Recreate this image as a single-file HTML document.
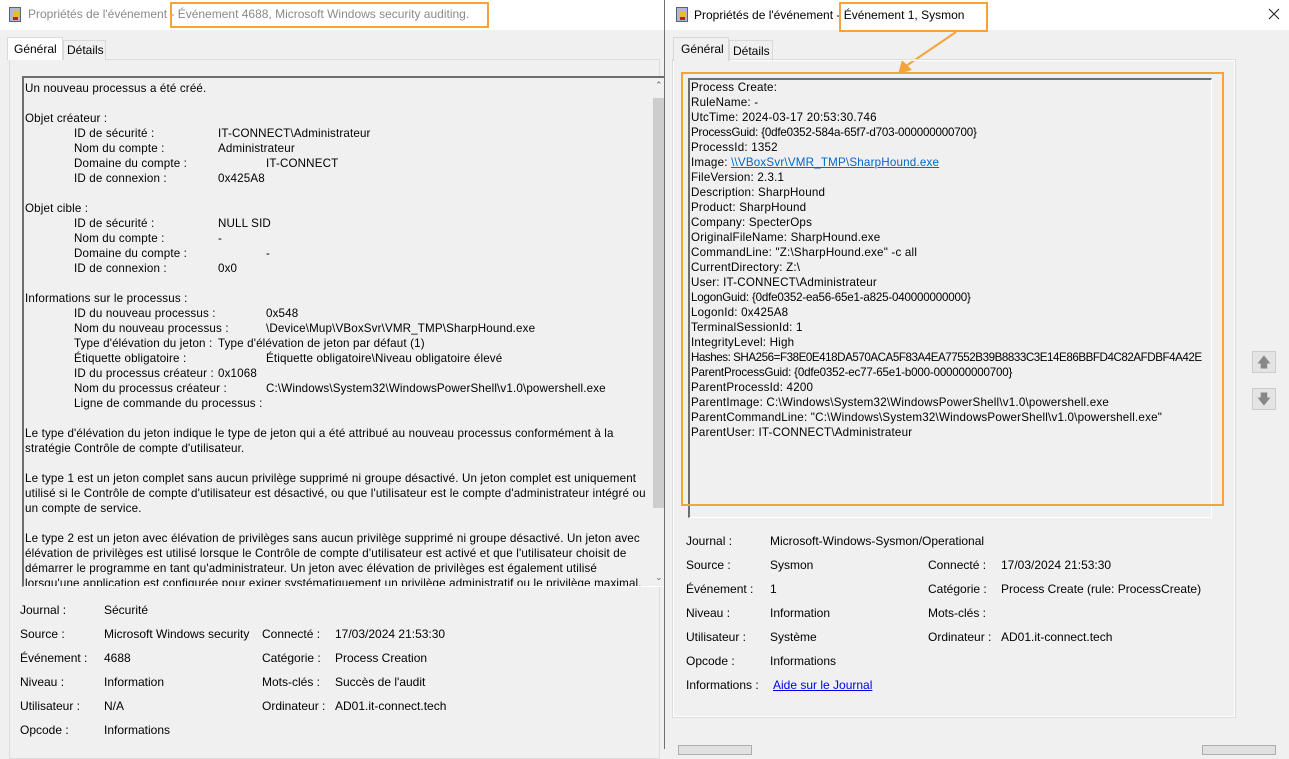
<!DOCTYPE html>
<html><head><meta charset="utf-8"><style>
*{margin:0;padding:0;box-sizing:border-box}
body{width:1289px;height:749px;overflow:hidden;background:#f0f0f0;font-family:"Liberation Sans",sans-serif;font-size:12px;color:#000;position:relative}
.a{position:absolute;white-space:nowrap;line-height:15px}
.t{position:absolute;white-space:nowrap}
.ico{position:absolute;width:12px;height:15px;background:#b0b8d0;border:1px solid #5a6078}
.ico:after{content:"";position:absolute;left:3px;top:3px;width:6px;height:6px;background:#e8c020;border-radius:1px}
.ico:before{content:"";position:absolute;left:3px;top:9px;width:5px;height:3px;background:#c02020}
</style></head><body>
<!-- LEFT -->
<div style="position:absolute;left:0;top:0;width:664px;height:30px;background:#fff"></div>
<div class="ico" style="left:9px;top:7px"></div>
<div class="t" style="left:28px;top:7px;font-size:12px;color:#8a8a8a">Propriétés de l'événement - Événement 4688, Microsoft Windows security auditing.</div>
<div style="position:absolute;left:170px;top:2px;width:319px;height:26px;border:2px solid #f7a33c"></div>
<div style="position:absolute;left:9px;top:59px;width:651px;height:700px;border:1px solid #dcdcdc;background:#f0f0f0"></div>
<div style="position:absolute;left:7px;top:37px;width:56px;height:23px;background:#fff;border:1px solid #d9d9d9;border-bottom:none"></div>
<div class="t" style="left:14px;top:42px">Général</div>
<div style="position:absolute;left:63px;top:40px;width:43px;height:20px;border:1px solid #d9d9d9;border-bottom:none;background:#f0f0f0"></div>
<div class="t" style="left:67px;top:43px">Détails</div>
<div style="position:absolute;left:22px;top:76px;width:643px;height:511px;border-top:2px solid #6e6e6e;border-left:2px solid #6e6e6e;border-bottom:1px solid #fff;background:#f0f0f0;overflow:hidden">
<div style="position:absolute;left:1px;top:-6px;font-size:11.6px;letter-spacing:0.15px">
<div class="a" style="top:9px">Un nouveau processus a été créé.</div>
<div class="a" style="top:39px">Objet créateur :</div>
<div class="a" style="top:54px;left:49px">ID de sécurité :</div><div class="a" style="top:54px;left:193px">IT-CONNECT\Administrateur</div>
<div class="a" style="top:69px;left:49px">Nom du compte :</div><div class="a" style="top:69px;left:193px">Administrateur</div>
<div class="a" style="top:84px;left:49px">Domaine du compte :</div><div class="a" style="top:84px;left:241px">IT-CONNECT</div>
<div class="a" style="top:99px;left:49px">ID de connexion :</div><div class="a" style="top:99px;left:193px">0x425A8</div>
<div class="a" style="top:129px">Objet cible :</div>
<div class="a" style="top:144px;left:49px">ID de sécurité :</div><div class="a" style="top:144px;left:193px">NULL SID</div>
<div class="a" style="top:159px;left:49px">Nom du compte :</div><div class="a" style="top:159px;left:193px">-</div>
<div class="a" style="top:174px;left:49px">Domaine du compte :</div><div class="a" style="top:174px;left:241px">-</div>
<div class="a" style="top:189px;left:49px">ID de connexion :</div><div class="a" style="top:189px;left:193px">0x0</div>
<div class="a" style="top:219px">Informations sur le processus :</div>
<div class="a" style="top:234px;left:49px">ID du nouveau processus :</div><div class="a" style="top:234px;left:241px">0x548</div>
<div class="a" style="top:249px;left:49px">Nom du nouveau processus :</div><div class="a" style="top:249px;left:241px">\Device\Mup\VBoxSvr\VMR_TMP\SharpHound.exe</div>
<div class="a" style="top:264px;left:49px">Type d'élévation du jeton :</div><div class="a" style="top:264px;left:193px">Type d'élévation de jeton par défaut (1)</div>
<div class="a" style="top:279px;left:49px">Étiquette obligatoire :</div><div class="a" style="top:279px;left:241px">Étiquette obligatoire\Niveau obligatoire élevé</div>
<div class="a" style="top:294px;left:49px">ID du processus créateur :</div><div class="a" style="top:294px;left:193px">0x1068</div>
<div class="a" style="top:309px;left:49px">Nom du processus créateur :</div><div class="a" style="top:309px;left:241px">C:\Windows\System32\WindowsPowerShell\v1.0\powershell.exe</div>
<div class="a" style="top:324px;left:49px">Ligne de commande du processus :</div>
<div class="a" style="top:354px">Le type d'élévation du jeton indique le type de jeton qui a été attribué au nouveau processus conformément à la</div>
<div class="a" style="top:369px">stratégie Contrôle de compte d'utilisateur.</div>
<div class="a" style="top:399px">Le type 1 est un jeton complet sans aucun privilège supprimé ni groupe désactivé. Un jeton complet est uniquement</div>
<div class="a" style="top:414px">utilisé si le Contrôle de compte d'utilisateur est désactivé, ou que l'utilisateur est le compte d'administrateur intégré ou</div>
<div class="a" style="top:429px">un compte de service.</div>
<div class="a" style="top:459px">Le type 2 est un jeton avec élévation de privilèges sans aucun privilège supprimé ni groupe désactivé. Un jeton avec</div>
<div class="a" style="top:474px">élévation de privilèges est utilisé lorsque le Contrôle de compte d'utilisateur est activé et que l'utilisateur choisit de</div>
<div class="a" style="top:489px">démarrer le programme en tant qu'administrateur. Un jeton avec élévation de privilèges est également utilisé</div>
<div class="a" style="top:504px">lorsqu'une application est configurée pour exiger systématiquement un privilège administratif ou le privilège maximal.</div>
</div>
<div style="position:absolute;left:628px;top:0;width:15px;height:511px;background:#f0f0f0"></div>
<div style="position:absolute;left:629px;top:20px;width:13px;height:410px;background:#cdcdcd"></div>
<div class="t" style="left:631px;top:2px;font-size:9px;color:#666">&#8963;</div>
<div class="t" style="left:631px;top:494px;font-size:9px;color:#666">&#8964;</div>
</div>
<div style="font-size:12px">
<div class="t" style="left:20px;top:603px">Journal :</div><div class="t" style="left:104px;top:603px">Sécurité</div>
<div class="t" style="left:20px;top:627px">Source :</div><div class="t" style="left:104px;top:627px">Microsoft Windows security</div>
<div class="t" style="left:262px;top:627px">Connecté :</div><div class="t" style="left:335px;top:627px">17/03/2024 21:53:30</div>
<div class="t" style="left:20px;top:651px">Événement :</div><div class="t" style="left:104px;top:651px">4688</div>
<div class="t" style="left:262px;top:651px">Catégorie :</div><div class="t" style="left:335px;top:651px">Process Creation</div>
<div class="t" style="left:20px;top:675px">Niveau :</div><div class="t" style="left:104px;top:675px">Information</div>
<div class="t" style="left:262px;top:675px">Mots-clés :</div><div class="t" style="left:335px;top:675px">Succès de l'audit</div>
<div class="t" style="left:20px;top:699px">Utilisateur :</div><div class="t" style="left:104px;top:699px">N/A</div>
<div class="t" style="left:262px;top:699px">Ordinateur :</div><div class="t" style="left:335px;top:699px">AD01.it-connect.tech</div>
<div class="t" style="left:20px;top:723px">Opcode :</div><div class="t" style="left:104px;top:723px">Informations</div>
</div>
<!-- divider -->
<div style="position:absolute;left:664px;top:0;width:1px;height:749px;background:#707070"></div>
<!-- RIGHT -->
<div style="position:absolute;left:665px;top:0;width:624px;height:30px;background:#fff"></div>
<div class="ico" style="left:676px;top:7px"></div>
<div class="t" style="left:694px;top:8px;font-size:12px">Propriétés de l'événement - Événement 1, Sysmon</div>
<div style="position:absolute;left:839px;top:2px;width:149px;height:30px;border:2px solid #f7a33c"></div>
<svg style="position:absolute;left:1268px;top:8px" width="12" height="12"><path d="M1 1L11 11M11 1L1 11" stroke="#222" stroke-width="1.1"/></svg>
<svg style="position:absolute;left:890px;top:30px" width="70" height="50"><line x1="66" y1="2" x2="16" y2="36" stroke="#f7a33c" stroke-width="2"/><polygon points="8,44 12,30 22,40" fill="#f7a33c"/></svg>
<div style="position:absolute;left:673px;top:60px;width:562px;height:657px;border:1px solid #fff;outline:1px solid #dcdcdc"></div>
<div style="position:absolute;left:673px;top:37px;width:56px;height:24px;background:#f0f0f0;border:1px solid #d9d9d9;border-bottom:none"></div>
<div class="t" style="left:681px;top:42px">Général</div>
<div style="position:absolute;left:729px;top:40px;width:44px;height:21px;border:1px solid #d9d9d9;border-bottom:none"></div>
<div class="t" style="left:733px;top:44px">Détails</div>
<div style="position:absolute;left:688px;top:78px;width:524px;height:440px;border-left:2px solid #6e6e6e;border-top:2px solid #6e6e6e;border-right:1px solid #fff;border-bottom:1px solid #fff"></div>
<div style="position:absolute;left:691px;top:-1px;font-size:11.6px;letter-spacing:0.2px">
<div class="a" style="top:81px">Process Create:</div>
<div class="a" style="top:96px">RuleName: -</div>
<div class="a" style="top:111px">UtcTime: 2024-03-17 20:53:30.746</div>
<div class="a" style="top:126px;letter-spacing:-0.2px">ProcessGuid: {0dfe0352-584a-65f7-d703-000000000700}</div>
<div class="a" style="top:141px">ProcessId: 1352</div>
<div class="a" style="top:156px">Image: <span style="color:#0066cc;text-decoration:underline">\\VBoxSvr\VMR_TMP\SharpHound.exe</span></div>
<div class="a" style="top:171px">FileVersion: 2.3.1</div>
<div class="a" style="top:186px">Description: SharpHound</div>
<div class="a" style="top:201px">Product: SharpHound</div>
<div class="a" style="top:216px">Company: SpecterOps</div>
<div class="a" style="top:231px">OriginalFileName: SharpHound.exe</div>
<div class="a" style="top:246px">CommandLine: "Z:\SharpHound.exe" -c all</div>
<div class="a" style="top:261px">CurrentDirectory: Z:\</div>
<div class="a" style="top:276px">User: IT-CONNECT\Administrateur</div>
<div class="a" style="top:291px;letter-spacing:-0.2px">LogonGuid: {0dfe0352-ea56-65e1-a825-040000000000}</div>
<div class="a" style="top:306px">LogonId: 0x425A8</div>
<div class="a" style="top:321px">TerminalSessionId: 1</div>
<div class="a" style="top:336px">IntegrityLevel: High</div>
<div class="a" style="top:351px;letter-spacing:-0.45px">Hashes: SHA256=F38E0E418DA570ACA5F83A4EA77552B39B8833C3E14E86BBFD4C82AFDBF4A42E</div>
<div class="a" style="top:366px;letter-spacing:-0.2px">ParentProcessGuid: {0dfe0352-ec77-65e1-b000-000000000700}</div>
<div class="a" style="top:381px">ParentProcessId: 4200</div>
<div class="a" style="top:396px">ParentImage: C:\Windows\System32\WindowsPowerShell\v1.0\powershell.exe</div>
<div class="a" style="top:411px">ParentCommandLine: "C:\Windows\System32\WindowsPowerShell\v1.0\powershell.exe"</div>
<div class="a" style="top:426px">ParentUser: IT-CONNECT\Administrateur</div>
</div>
<div style="position:absolute;left:681px;top:72px;width:543px;height:434px;border:2px solid #f7a33c"></div>
<div style="position:absolute;left:1252px;top:351px;width:24px;height:22px;background:#e4e4e4;border:1px solid #ccc;color:#888;text-align:center;font-size:14px;line-height:20px">&#129093;</div>
<div style="position:absolute;left:1252px;top:388px;width:24px;height:22px;background:#e4e4e4;border:1px solid #ccc;color:#888;text-align:center;font-size:14px;line-height:20px">&#129095;</div>
<div style="font-size:12px">
<div class="t" style="left:686px;top:534px">Journal :</div><div class="t" style="left:770px;top:534px">Microsoft-Windows-Sysmon/Operational</div>
<div class="t" style="left:686px;top:558px">Source :</div><div class="t" style="left:770px;top:558px">Sysmon</div>
<div class="t" style="left:928px;top:558px">Connecté :</div><div class="t" style="left:1001px;top:558px">17/03/2024 21:53:30</div>
<div class="t" style="left:686px;top:582px">Événement :</div><div class="t" style="left:770px;top:582px">1</div>
<div class="t" style="left:928px;top:582px">Catégorie :</div><div class="t" style="left:1001px;top:582px">Process Create (rule: ProcessCreate)</div>
<div class="t" style="left:686px;top:606px">Niveau :</div><div class="t" style="left:770px;top:606px">Information</div>
<div class="t" style="left:928px;top:606px">Mots-clés :</div>
<div class="t" style="left:686px;top:630px">Utilisateur :</div><div class="t" style="left:770px;top:630px">Système</div>
<div class="t" style="left:928px;top:630px">Ordinateur :</div><div class="t" style="left:1001px;top:630px">AD01.it-connect.tech</div>
<div class="t" style="left:686px;top:654px">Opcode :</div><div class="t" style="left:770px;top:654px">Informations</div>
<div class="t" style="left:686px;top:678px">Informations :</div><div class="t" style="left:773px;top:678px;color:#0000ee;text-decoration:underline">Aide sur le Journal</div>
</div>
<div style="position:absolute;left:678px;top:745px;width:74px;height:10px;background:#e1e1e1;border:1px solid #adadad"></div>
<div style="position:absolute;left:1202px;top:745px;width:74px;height:10px;background:#e1e1e1;border:1px solid #adadad"></div>
</body></html>
